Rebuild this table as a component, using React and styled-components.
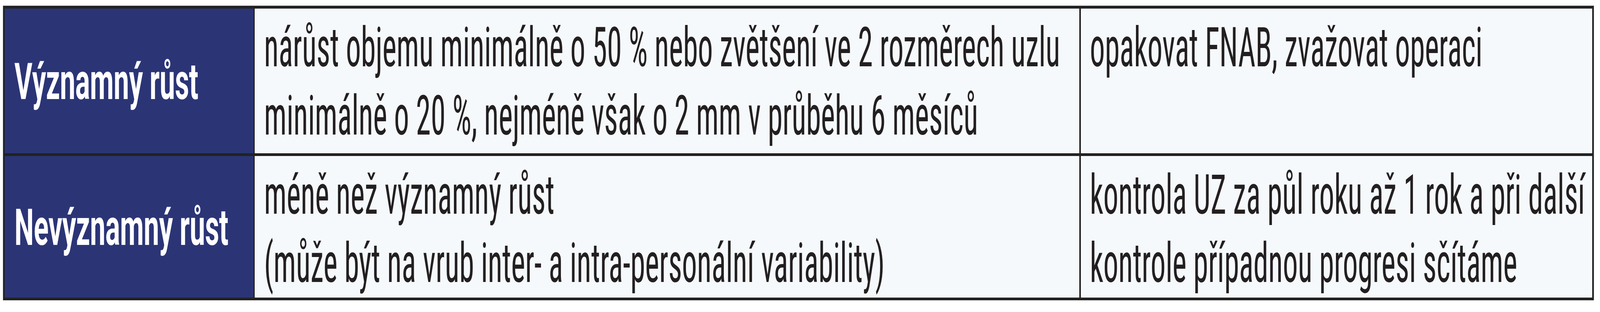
import React from 'react';
import styled, { createGlobalStyle } from 'styled-components';

// the layout is drawn for a 7533px wide frame; horizontal sizes are
// fractions of the viewport so it still lines up when the window is narrower
const FRAME = 7533;
const x = (px) => `${((px / FRAME) * 100).toFixed(4)}vw`;

const GlobalStyle = createGlobalStyle`
  body {
    margin: 0;
    padding: 15px 0 0 ${x(15)};
    background: #ffffff;
  }
`;

const Table = styled.div`
  display: grid;
  grid-template-columns: ${x(1171)} ${x(3881)} ${x(2408)};
  column-gap: ${x(7)};
  row-gap: 7px;
  padding: 7px ${x(7)};
  width: max-content;
  background: #222222;
  box-shadow: 0 0 0 1px #b4b4b4;
`;

const HeadCell = styled.div`
  display: flex;
  align-items: center;
  padding: 4px 0 0 ${x(47)};
  min-height: ${(p) => p.$height}px;
  box-sizing: border-box;
  background: #2b3576;
  color: #ffffff;
  font-family: Roboto, 'Noto Sans', sans-serif;
  font-weight: 700;
  font-size: 129px;
  white-space: nowrap;
  overflow: hidden;
`;

const Cell = styled.div`
  padding: 12px 0 ${(p) => p.$padBottom}px ${x(44)};
  background: #f5f9fc;
  color: #231f20;
  font-family: 'Roboto Condensed', Roboto, sans-serif;
  font-weight: 400;
  font-size: 141px;
  line-height: 175px;
  overflow: hidden;
`;

const Line = styled.span`
  display: block;
  white-space: nowrap;
  transform: scaleX(var(--sx, 1));
  transform-origin: 0 50%;
`;

const rows = [
  {
    head: 'Významný růst',
    height: 371,
    padBottom: 9,
    criteria: [
      'nárůst objemu minimálně o 50 % nebo zvětšení ve 2 rozměrech uzlu',
      'minimálně o 20 %, nejméně však o 2 mm v průběhu 6 měsíců',
    ],
    action: ['opakovat FNAB, zvažovat operaci'],
  },
  {
    head: 'Nevýznamný růst',
    height: 363,
    padBottom: 1,
    criteria: [
      'méně než významný růst',
      '(může být na vrub inter- a intra-personální variability)',
    ],
    action: [
      'kontrola UZ za půl roku až 1 rok a při další',
      'kontrole případnou progresi sčítáme',
    ],
  },
];

function App() {
  const [sx, setSx] = React.useState(() => Math.min(1, window.innerWidth / FRAME));

  React.useEffect(() => {
    const onResize = () => setSx(Math.min(1, window.innerWidth / FRAME));
    window.addEventListener('resize', onResize);
    return () => window.removeEventListener('resize', onResize);
  }, []);

  return (
    <>
      <GlobalStyle />
      <Table style={{ '--sx': sx }}>
        {rows.map((row) => (
          <React.Fragment key={row.head}>
            <HeadCell $height={row.height}>
              <Line>{row.head}</Line>
            </HeadCell>
            <Cell $padBottom={row.padBottom}>
              {row.criteria.map((line) => (
                <Line key={line}>{line}</Line>
              ))}
            </Cell>
            <Cell $padBottom={row.padBottom}>
              {row.action.map((line) => (
                <Line key={line}>{line}</Line>
              ))}
            </Cell>
          </React.Fragment>
        ))}
      </Table>
    </>
  );
}

export default App;
